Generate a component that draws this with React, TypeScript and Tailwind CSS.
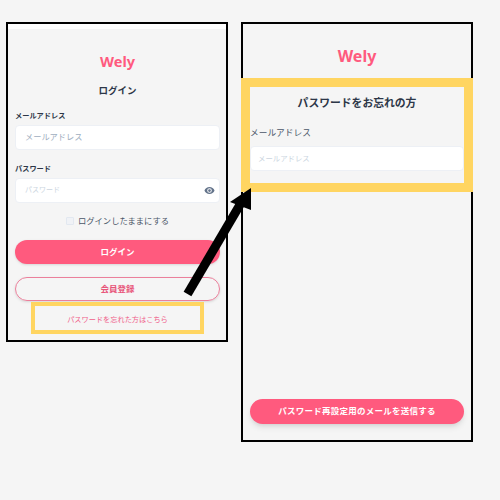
const jp = "font-['Noto_Sans','Noto_Sans_CJK_JP',sans-serif]";

const EyeIcon = () => (
  <svg width="11" height="11" viewBox="0 0 24 24" fill="#64748b">
    <path d="M12 4.5C7 4.5 2.7 7.6 1 12c1.7 4.4 6 7.5 11 7.5s9.3-3.1 11-7.5c-1.7-4.4-6-7.5-11-7.5zm0 12.5a5 5 0 1 1 0-10 5 5 0 0 1 0 10zm0-8a3 3 0 1 0 0 6 3 3 0 0 0 0-6z" />
  </svg>
);

const LoginPhone = () => (
  <div className="flex flex-col w-[222px] h-[320px] border-2 border-black bg-[#f5f5f5]">
    <div className="h-[5px] bg-white shrink-0" />
    <div className="flex flex-col px-[7px] pr-[6px]">
      <div className="mt-[20px] h-[24px] leading-[24px] text-center text-[14.5px] font-bold text-[#ff5a7e]">Wely</div>
      <div className="mt-[10px] h-[16px] leading-[16px] text-center text-[9.5px] font-bold text-[#2d3748]">ログイン</div>
      <div className="mt-[10px] h-[12px] leading-[12px] text-[7.2px] font-bold text-[#2d3748]">メールアドレス</div>
      <div className="mt-[4px] flex items-center h-[25px] px-[9px] bg-white border border-[#edf0f5] rounded text-[8.2px] text-[#a0aec0]">
        メールアドレス
      </div>
      <div className="mt-[12px] h-[12px] leading-[12px] text-[7.2px] font-bold text-[#2d3748]">パスワード</div>
      <div className="mt-[4px] flex items-center justify-between h-[25px] pl-[9px] pr-[4px] bg-white border border-[#edf0f5] rounded text-[7px] text-[#cbd5e0]">
        <span>パスワード</span>
        <EyeIcon />
      </div>
      <div className="mt-[11px] flex items-center justify-center gap-[4px] h-[14px]">
        <span className="w-[8px] h-[8px] border border-[#e2e8f0] bg-[#f0f2f6] rounded-[1px]" />
        <span className="text-[8.3px] text-[#4a5568]">ログインしたままにする</span>
      </div>
      <div className="mt-[12px] flex items-center justify-center h-[24px] rounded-full bg-[#ff5a7e] shadow-sm text-[8.5px] font-bold text-white">
        ログイン
      </div>
      <div className="mt-[13px] flex items-center justify-center h-[24px] rounded-full border border-[#eb7f9b] shadow-sm text-[8.5px] font-bold text-[#e8557a]">
        会員登録
      </div>
      <div className="mt-[12px] h-[12px] leading-[12px] text-center text-[7.2px] text-[#f0608a]">パスワードを忘れた方はこちら</div>
    </div>
  </div>
);

const ResetPhone = () => (
  <div className="flex flex-col w-[232px] h-[420px] border-2 border-black bg-[#f5f5f5] px-[7px]">
    <div className="mt-[18px] h-[28px] leading-[28px] text-center text-[16px] font-bold text-[#ff5a7e]">Wely</div>
    <div className="mt-[23px] h-[20px] leading-[20px] text-center text-[10.8px] font-bold text-[#2d3748]">パスワードをお忘れの方</div>
    <div className="mt-[12px] h-[16px] leading-[16px] text-[8.7px] text-[#4a5568]">メールアドレス</div>
    <div className="mt-[5px] flex items-center h-[25px] px-[7px] bg-white border border-[#edf0f5] rounded-sm text-[7.4px] text-[#cbd5e0]">
      メールアドレス
    </div>
    <div className="mt-auto mb-[16px] flex items-center justify-center h-[25px] rounded-full bg-[#ff5a7e] shadow-md text-[8.5px] tracking-[0.25px] font-bold text-white">
      パスワード再設定用のメールを送信する
    </div>
  </div>
);

export default function App() {
  return (
    <div className={`relative w-[500px] h-[500px] overflow-hidden bg-[#f5f5f5] ${jp}`}>
      <div className="flex items-start gap-[13px] pl-[6px] pt-[22px]">
        <LoginPhone />
        <ResetPhone />
      </div>

      {/* highlight boxes and arrow sit on top of the screens */}
      <div className="absolute left-[31px] top-[302px] w-[173px] h-[32px] border-[4px] border-[#ffd561]" />
      <div className="absolute left-[241px] top-[78px] w-[232px] h-[114px] border-[9px] border-[#ffd561]" />
      <svg className="absolute left-0 top-0 pointer-events-none" width="500" height="500" viewBox="0 0 500 500">
        <line x1="187.5" y1="294" x2="241" y2="203" stroke="#000" strokeWidth="9" />
        <polygon points="251,188 251,210 230,202" fill="#000" />
      </svg>
    </div>
  );
}
